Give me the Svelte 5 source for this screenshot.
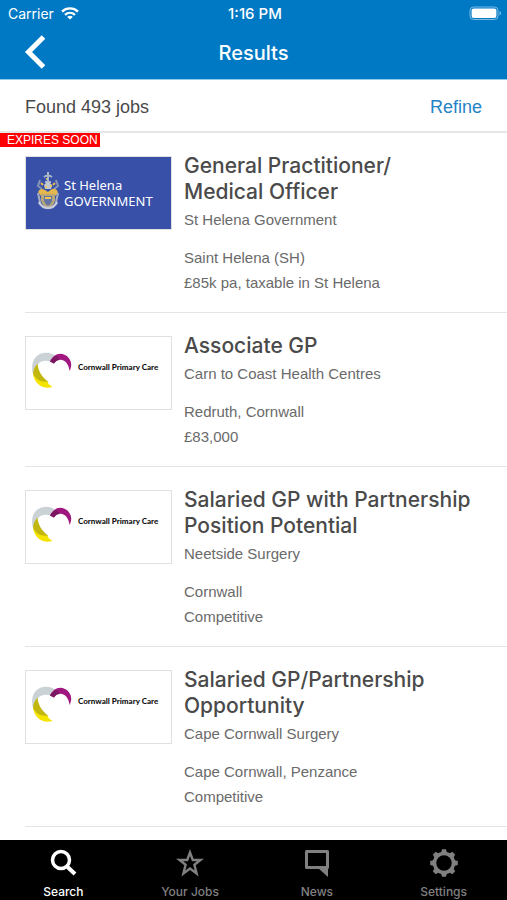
<script>
  const jobs = [
    { title: ['General Practitioner/', 'Medical Officer'], employer: 'St Helena Government', place: 'Saint Helena (SH)', pay: '£85k pa, taxable in St Helena', logo: 'helena', expiring: true },
    { title: ['Associate GP'], employer: 'Carn to Coast Health Centres', place: 'Redruth, Cornwall', pay: '£83,000', logo: 'cornwall' },
    { title: ['Salaried GP with Partnership', 'Position Potential'], employer: 'Neetside Surgery', place: 'Cornwall', pay: 'Competitive', logo: 'cornwall' },
    { title: ['Salaried GP/Partnership', 'Opportunity'], employer: 'Cape Cornwall Surgery', place: 'Cape Cornwall, Penzance', pay: 'Competitive', logo: 'cornwall' }
  ];
  const tabs = ['Search', 'Your Jobs', 'News', 'Settings'];
  let current = $state('Search');
</script>

<div class="app">
  <header>
    <div class="status">
      <span class="carrier">Carrier
        <svg width="18" height="13" viewBox="0 0 18 13" fill="none" stroke="#fff" stroke-width="2.3">
          <path d="M1 4.6C5.500.4 12.500.4 17 4.600" />
          <path d="M4 7.900C6.900 5.200 11.100 5.200 14 7.900" />
          <path d="M9 12.600 6.200 9.900C7.700 8.500 10.300 8.500 11.800 9.900Z" fill="#fff" stroke="none" />
        </svg>
      </span>
      <span class="time">1:16 PM</span>
      <span class="battery">
        <svg width="33" height="15" viewBox="0 0 33 15">
          <rect x="1" y="1" width="28" height="12.500" rx="3.500" fill="none" stroke="#7fbce3" />
          <rect x="2.600" y="2.600" width="24.800" height="9.300" rx="2" fill="#fff" />
          <path d="M30.500 5v4.500q1.500-.6 1.500-2.250T30.500 5Z" fill="#7fbce3" />
        </svg>
      </span>
    </div>
    <div class="navbar">
      <button class="back" aria-label="Back">
        <svg width="22" height="36" viewBox="0 0 22 36"><path d="M19.500 2 4.500 17l15 15" fill="none" stroke="#fff" stroke-width="5" /></svg>
      </button>
      <h1>Results</h1>
    </div>
  </header>

  <div class="summary">
    <span>Found 493 jobs</span>
    <a href="#refine">Refine</a>
  </div>

  <main>
    {#each jobs as job}
      <article>
        {#if job.expiring}<span class="badge">EXPIRES SOON</span>{/if}
        {#if job.logo === 'helena'}
          <div class="logo helena">
            <svg width="24" height="40" viewBox="0 0 24 40">
              <path d="M12 1v10M8 6q4-3 8 0M9 11h6" stroke="#a8b6c8" stroke-width="2" fill="none" />
              <path d="M4 9l-2 6 4 3M20 9l2 6-4 3" stroke="#8795b9" stroke-width="2" fill="none" />
              <path d="M8 14l4-4 4 4-1 4H9Z" fill="#c3c9ce" />
              <path d="M2 21q2-5 7-2l3 2 4-3q5-1 6 4l-3 3H5Z" fill="#e4b84c" />
              <path d="M5 23h14v6q-1 6-7 8-6-2-7-8Z" fill="#b9a877" />
              <path d="M8 25h8v5q-1 3-4 5-3-2-4-5Z" fill="#6474a4" />
              <path d="M2 22l2 9M22 22l-2 9" stroke="#a7afc4" stroke-width="2" />
              <path d="M3 31q3 6 9 6t9-6" stroke="#c9cddb" stroke-width="2.500" fill="none" />
              <path d="M9 16h2M14 15h2M9 27h6" stroke="#f0c95b" stroke-width="2" />
              <path d="M5 12l2 2M19 12l-2 2M10 8h1" stroke="#e4b84c" stroke-width="2" />
            </svg>
            <div>
              <div>St Helena</div>
              <div>GOVERNMENT</div>
            </div>
          </div>
        {:else}
          <div class="logo cornwall">
            <svg width="41" height="37" viewBox="0 0 41 37">
              <path d="M2 22C-1 12 3 1 15 .8 19 .7 22 2 25 4L20 9.500C14 8 9 9 6.500 13 4 16 3 19 2 22Z" fill="#cbd2d5" />
              <path d="M6.500 11.500C7 19 11 25 17.500 30L14 32C9 32 4 28 2 22 2 18 4 14 6.500 11.500Z" fill="#c2b70f" />
              <path d="M2 21C4 27 9 30.500 16 29.500 17.500 32 19 33.500 21.500 35 12 38 3 32 2 21Z" fill="#f5e400" />
              <path d="M19 9.500C22 3 28 0 34 3 40 6 42 13 38.500 19 38 13 35 9 31 8 27.500 7 25 8.500 23 11.500Z" fill="#a0187f" />
              <path d="M19 9.500C21 6 23 4.500 25.500 4L29 8C26 8 24.500 9 23 11.500Z" fill="#7c1762" />
            </svg>
            <span>Cornwall Primary Care</span>
          </div>
        {/if}
        <div class="details">
          <h2>{#each job.title as line}<span>{line}</span>{/each}</h2>
          <p class="employer">{job.employer}</p>
          <p>{job.place}</p>
          <p>{job.pay}</p>
        </div>
      </article>
    {/each}
  </main>

  <nav>
    {#each tabs as tab}
      <button class:active={current === tab} onclick={() => (current = tab)}>
        <svg width="30" height="30" viewBox="0 0 30 30" fill="none" stroke="currentColor">
          {#if tab === 'Search'}
            <circle cx="13" cy="12" r="8.500" stroke-width="3.500" />
            <path d="M19 18.500 27 26" stroke-width="4" />
          {:else if tab === 'Your Jobs'}
            <path d="M15 4.500 17.800 12H25.500L19.400 16.800 21.600 25.500 15 20.600 8.400 25.500 10.600 16.800 4.500 12H12.200Z" stroke-width="2.400" />
          {:else if tab === 'News'}
            <path d="M4.500 3.500H25.500V19.500H4.500Z" stroke-width="3" stroke-linejoin="round" />
            <path d="M16 20h10v9Z" fill="currentColor" stroke="none" />
          {:else}
            <circle cx="15" cy="15" r="9.500" stroke-width="3.500" />
            {#each [0, 45, 90, 135, 180, 225, 270, 315] as angle}
              <path d="M12 5 13 1.200H17L18 5Z" fill="currentColor" stroke="none" transform="rotate({angle} 15 15)" />
            {/each}
          {/if}
        </svg>
        <span>{tab}</span>
      </button>
    {/each}
  </nav>
</div>

<style>
  :global(body) { margin: 0; background: #fff; }
  .app {
    display: flex;
    flex-direction: column;
    min-height: 100vh;
    font-family: "Liberation Sans", Arial, sans-serif;
    color: #4a4a4a;
  }
  button { border: 0; padding: 0; background: none; font: inherit; cursor: pointer; }
  svg { display: block; flex: none; }
  header { background: #0079c4; color: #fff; border-bottom: 1px solid #8ccbee; }
  .status {
    display: grid;
    grid-template-columns: 1fr auto 1fr;
    align-items: center;
    height: 27px;
    padding: 0 5px 0 8px;
    font-family: Inter, sans-serif;
    font-size: 14px;
  }
  .carrier { display: flex; align-items: center; gap: 7px; }
  .time { font-size: 15px; font-weight: 500; }
  .battery { justify-self: end; }
  .navbar { display: grid; grid-template-columns: 1fr auto 1fr; align-items: center; height: 52px; padding: 0 24px; }
  .back { justify-self: start; }
  h1 { margin: 0; font: 500 20px/26px Inter, sans-serif; }
  .summary {
    display: flex;
    justify-content: space-between;
    align-items: center;
    height: 51px;
    padding: 0 25px;
    border-bottom: 2px solid #e6e6e6;
    font-size: 18px;
    line-height: 22px;
  }
  .summary span, .summary a { padding-top: 2px; }
  .summary a { color: #2583c5; text-decoration: none; }
  main { flex: 1; }
  article { position: relative; display: flex; align-items: flex-start; gap: 12px; padding-left: 25px; }
  article::after { content: ""; position: absolute; left: 25px; right: 0; bottom: 0; height: 1px; background: #e4e4e4; }
  .badge {
    position: absolute;
    left: 0;
    top: 0;
    padding: 0 2px 0 7px;
    background: #f00;
    color: #fff;
    font-size: 12px;
    line-height: 14px;
  }
  .logo { box-sizing: border-box; flex: none; display: flex; width: 147px; height: 74px; margin-top: 23px; border: 1px solid #e0e0e0; }
  .helena { align-items: center; gap: 4px; padding-left: 10px; background: #3850a8; color: #fff; font: 13px/16px "Noto Sans", sans-serif; }
  .helena svg { margin-bottom: 4px; }
  .cornwall { align-items: flex-start; gap: 6px; padding: 15px 0 0 5px; color: #111; font: 900 8px/30px Lato, sans-serif; white-space: nowrap; }
  .details { flex: 1; padding: 20px 15px 18px 0; }
  h2 { margin: 0 0 2px; font: 500 21px/26px Inter, sans-serif; }
  h2 span { display: block; }
  p { margin: 0; font-size: 15px; line-height: 25px; color: #6a6a6a; }
  .employer { margin-bottom: 13px; }
  nav { position: sticky; bottom: 0; display: flex; height: 60px; background: #000; }
  nav button { flex: 1; display: flex; flex-direction: column; align-items: center; gap: 6px; padding-top: 8px; color: #808080; font: 500 12px/16px Inter, sans-serif; }
  nav .active { color: #fff; }
</style>
